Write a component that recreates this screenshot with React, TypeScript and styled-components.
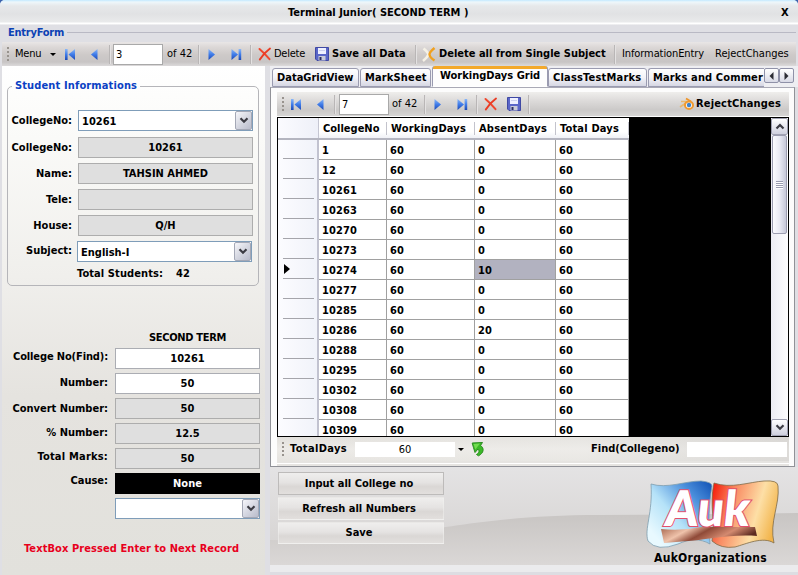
import React from 'react';
import styled, { createGlobalStyle, css } from 'styled-components';

const Global = createGlobalStyle`
  * { box-sizing: border-box; }
  body { margin: 0; background: #3a62ad; overflow: hidden; }
  #root { font: bold 11px/14px "DejaVu Sans Condensed", "DejaVu Sans", sans-serif; color: #000; }
  svg { display: block; overflow: visible; }
`;

const Window = styled.div`
  width: 798px;
  height: 575px;
  overflow: hidden;
  display: flex;
  flex-direction: column;
  background: #dfdfe4;
  border-radius: 5px 5px 0 0;
`;

const TitleBar = styled.header`
  height: 25px;
  flex: none;
  display: grid;
  grid-template-columns: 288px 493px 1fr;
  align-items: center;
  background: linear-gradient(#c3e9ff 0, #eef7fb 2px, #e6e8ea 6px, #e1e2e4 14px, #e9eaeb 22px, #fff 23px, #fff 24px, #dcdce0 25px);
`;

const Text = styled.span<{ $ls?: number; $regular?: boolean }>`
  white-space: nowrap;
  letter-spacing: ${p => p.$ls ?? 0}px;
  font-weight: ${p => (p.$regular ? 400 : 700)};
`;

const FormCaption = styled.div`
  height: 17px;
  flex: none;
  display: flex;
  align-items: center;
  color: #0b41b4;
  padding: 0 2px 2px 8px;
  &::after {
    content: '';
    flex: 1;
    height: 1px;
    margin-left: 3px;
    background: #b9b9c4;
  }
`;

const barFace = {
  main: 'linear-gradient(#e9e6e6 0, #dcd8d7 5px, #cdc9c8 13px, #c8c5c5 20px, #dcdadb 24px)',
  inner: 'linear-gradient(#efeeec 0, #dedcdb 8px, #cbc9c8 18px, #d6d5d4 24px)',
  foot: 'linear-gradient(90deg, rgba(240,238,234,.3), rgba(240,239,236,.5) 60%, rgba(214,212,210,.6)), linear-gradient(#dcdad6, #ebe9e6 50%, #e2e0dc)',
};

const Bar = styled.div<{ $cols: string; $face: keyof typeof barFace; $h: number }>`
  height: ${p => p.$h}px;
  flex: none;
  display: grid;
  grid-template-columns: ${p => p.$cols};
  align-items: center;
  background: ${p => barFace[p.$face]};
`;

const MainBarFrame = styled.div`
  padding: 0 2px;
  flex: none;
`;

const Grip = styled.i`
  width: 2px;
  height: 15px;
  margin-left: 5px;
  background: repeating-linear-gradient(#98938e 0 2px, transparent 2px 4px);
`;

const Separator = styled.i`
  width: 2px;
  height: 19px;
  border-left: 1px solid #b9b6b6;
  border-right: 1px solid #e4e2e2;
`;

const Caret = styled.i`
  width: 0;
  height: 0;
  border: 3px solid transparent;
  border-top-color: #000;
  border-bottom: 0;
`;

const NumberBox = styled.div`
  width: 50px;
  height: 21px;
  border: 1px solid #a9a9a9;
  background: #fff;
  padding: 3px 2px;
  font-weight: 400;
`;

const Body = styled.main`
  flex: 1;
  min-height: 0;
  display: flex;
`;

const LeftPanel = styled.section`
  width: 263px;
  margin-left: 2px;
  flex: none;
  display: flex;
  flex-direction: column;
  background: linear-gradient(#ffffff 0, #fbfbf9 60px, #f0efec 210px, #e5e3df 330px, #e2e1dc 509px);
`;

const GroupBox = styled.fieldset`
  margin: 13px 6px 0 5px;
  height: 207px;
  flex: none;
  padding: 0;
  border: 1px solid #b5b5b9;
  border-radius: 5px;
  min-width: 0;
  legend {
    margin-left: 4px;
    padding: 0 3px;
    height: 14px;
    color: #0b41c4;
  }
`;

const StudentFields = styled.div`
  padding-top: 17px;
`;

const Field = styled.div<{ $h: number; $labelWidth: number; $gap: number }>`
  height: ${p => p.$h}px;
  display: grid;
  grid-template-columns: ${p => p.$labelWidth}px 1fr;
  column-gap: ${p => p.$gap}px;
  align-items: start;
`;

const FieldLabel = styled.label<{ $ls?: number; $top: number }>`
  text-align: right;
  white-space: nowrap;
  letter-spacing: ${p => p.$ls ?? 0}px;
  padding-top: ${p => p.$top}px;
`;

const tones = {
  white: css`background: #fff; border-color: #abadb3;`,
  grey: css`background: #dfdfdf; border-color: #adadad;`,
  black: css`background: #000; border-color: #000; color: #fff;`,
};

const ValueBox = styled.div<{ $tone: keyof typeof tones; $w: number }>`
  width: ${p => p.$w}px;
  height: 21px;
  border: 1px solid;
  text-align: center;
  line-height: 19px;
  ${p => tones[p.$tone]}
`;

const ComboFrame = styled.div<{ $w: number; $shift?: number }>`
  width: ${p => p.$w}px;
  height: 21px;
  margin-left: ${p => p.$shift ?? 0}px;
  border: 1px solid #7f9db9;
  background: #fff;
  display: flex;
  justify-content: space-between;
  padding-left: 3px;
  line-height: 21px;
`;

const DropButton = styled.span`
  width: 17px;
  height: 19px;
  border: 1px solid #a4a8b6;
  border-radius: 2px;
  display: grid;
  place-items: center;
  background: linear-gradient(135deg, #f6f6fa, #d6d8e2 50%, #b9bccb);
`;

const Total = styled.div`
  display: flex;
  gap: 13px;
  padding: 4px 0 0 69px;
`;

const TermHeading = styled.div`
  margin: 45px 5px 3px 113px;
  text-align: center;
  letter-spacing: -0.3px;
`;

const Warning = styled.p`
  margin: 23px 0 0 22px;
  color: #e8001c;
  letter-spacing: 0.08px;
  white-space: nowrap;
`;

const RightPanel = styled.section`
  flex: 1;
  min-width: 0;
  margin-left: 5px;
  display: flex;
  flex-direction: column;
`;

const TabStrip = styled.nav`
  height: 21px;
  flex: none;
  display: flex;
  align-items: flex-end;
  padding-left: 2px;
  background: #eeeef2;
`;

const Tab = styled.div<{ $w: number; $active?: boolean; $ls?: number; $cut?: boolean }>`
  width: ${p => p.$w}px;
  height: ${p => (p.$active ? 21 : 19)}px;
  flex: none;
  overflow: hidden;
  white-space: nowrap;
  padding-left: ${p => (p.$active ? 7 : 4)}px;
  letter-spacing: ${p => p.$ls ?? 0}px;
  line-height: ${p => (p.$active ? 14 : 18)}px;
  border: 1px solid #9a9bb0;
  border-bottom-color: ${p => (p.$active ? '#fff' : '#9a9bb0')};
  border-radius: ${p => (p.$cut ? '3px 0 0 0' : '3px 3px 0 0')};
  background: linear-gradient(#fff, #f3f3f8 50%, #d6d7e3);
  margin-right: 1px;
  ${p => p.$cut && css`border-right: 0; margin-right: 0;`}
  ${p => p.$active && css`
    background: linear-gradient(#f3a92b 0 3px, #fdfdfd 3px);
    border-top: 0;
    padding-top: 3px;
    margin-right: 0;
  `}
`;

const ScrollTab = styled.span`
  width: 15px;
  height: 15px;
  margin: 0 0 4px 0;
  border: 1px solid #8f91a8;
  border-radius: 2px;
  display: grid;
  place-items: center;
  background: linear-gradient(#fff, #d9dae6);
`;

const TabPage = styled.div`
  width: 525px;
  height: 380px;
  flex: none;
  display: flex;
  flex-direction: column;
  padding: 4px 5px 0 6px;
  border: 1px solid #919298;
  border-top-color: #a9a9b5;
  background: #fcfcfc;
`;

const Grid = styled.div`
  height: 320px;
  width: 512px;
  flex: none;
  border: 1px solid #000;
  background: #000;
  display: flex;
  overflow: hidden;
  margin-top: 1px;
`;

const cols = '41px 68px 88px 81px 73px';

const Table = styled.div`
  width: 351px;
  background: #fff;
`;

const HeadRow = styled.div`
  height: 22px;
  display: grid;
  grid-template-columns: ${cols};
  background: linear-gradient(#fff 70%, #f0f1f6);
  border-bottom: 2px solid #b4b5c0;
`;

const HeadCell = styled.div<{ $ls?: number }>`
  padding: 4px 0 0 4px;
  white-space: nowrap;
  letter-spacing: ${p => p.$ls ?? 0}px;
  background: linear-gradient(#c3c3cc, #c3c3cc) right 4px / 1px 13px no-repeat;
  &:first-child { background: linear-gradient(90deg, #fbfbff, #eef0f8); border-right: 1px solid #c5c6d2; }
`;

const Row = styled.div`
  height: 20px;
  display: grid;
  grid-template-columns: ${cols};
`;

const RowHead = styled.div`
  border-right: 2px solid #c2c3d0;
  background: linear-gradient(#a5a5ab, #a5a5ab) 5px 18px / 31px 1px no-repeat, linear-gradient(90deg, #fcfcff, #f1f3fa);
  padding: 4px 0 0 6px;
`;

const Cell = styled.div<{ $selected?: boolean }>`
  border-right: 1px solid #a0a0a0;
  border-bottom: 1px solid #a0a0a0;
  padding: 4px 0 0 3px;
  background: ${p => (p.$selected ? '#b2b2c0' : '#fff')};
  letter-spacing: 0.1px;
`;

const ScrollBar = styled.div`
  width: 17px;
  margin-left: 142px;
  flex: none;
  display: flex;
  flex-direction: column;
  background: linear-gradient(90deg, #ececf3, #fdfdfe);
`;

const ScrollButton = styled.span`
  height: 17px;
  flex: none;
  border: 1px solid #a0a1b2;
  border-radius: 2px;
  display: grid;
  place-items: center;
  background: linear-gradient(#fff, #cfd0de);
`;

const Thumb = styled.span`
  height: 99px;
  flex: none;
  margin: 0 1px;
  border: 1px solid #9c9db0;
  border-radius: 2px;
  display: grid;
  place-items: center;
  background: linear-gradient(90deg, #fcfcff, #e9eaf3 50%, #c6c8d8);
  &::after {
    content: '';
    width: 7px;
    height: 8px;
    background: repeating-linear-gradient(#9a9cb0 0 1px, #fff 1px 2px);
  }
`;

const Filler = styled.span`
  flex: 1;
`;

const WhiteBox = styled.div`
  width: 100px;
  height: 15px;
  background: #fff;
  text-align: center;
  font-weight: 400;
  line-height: 16px;
`;

const FootLine = styled.div`
  height: 5px;
  background: linear-gradient(#e6e4e1 0 2px, #fff 2px 3px, #e6e4e1 3px);
`;

const Lower = styled.section`
  flex: 1;
  min-height: 0;
  display: grid;
  grid-template-columns: 1fr auto;
  grid-template-rows: 1fr;
`;

const Backdrop = styled.svg`
  grid-area: 1 / 1 / 2 / 3;
`;

const Actions = styled.div`
  grid-area: 1 / 1;
  z-index: 1;
  display: flex;
  flex-direction: column;
  padding: 5px 0 0 8px;
  gap: 2px;
`;

const Action = styled.button<{ $framed?: boolean }>`
  width: 166px;
  height: ${p => (p.$framed ? 23 : 22.5)}px;
  font: inherit;
  color: inherit;
  padding: 1px 4px 0 0;
  border: 1px solid ${p => (p.$framed ? '#bdbbba' : 'rgba(242,241,240,.5)')};
  background: linear-gradient(#efeeed, #e5e3e2 45%, #dad7d5 65%, #e2dfdd);
`;

const Brand = styled.div`
  grid-area: 1 / 2;
  z-index: 1;
  width: 151px;
  padding: 12px 0 0;
  display: flex;
  flex-direction: column;
  align-items: flex-start;
`;

const BrandName = styled.div`
  margin-left: 7px;
  font-size: 12px;
  letter-spacing: 0.3px;
  white-space: nowrap;
`;

function BlueArrow({ back, end }: { back?: boolean; end?: boolean }) {
  return (
    <svg width="11" height="13" viewBox="0 0 11 13">
      <defs>
        <linearGradient id="blue" x1="0" y1="0" x2="0" y2="1">
          <stop offset="0" stopColor="#8ab8f8" />
          <stop offset=".5" stopColor="#3f7be8" />
          <stop offset="1" stopColor="#1c49b5" />
        </linearGradient>
      </defs>
      {back ? (
        end ? (
          <>
            <rect x="0" y="1" width="2.6" height="11" fill="url(#blue)" />
            <path d="M10 1v11L3.500 6.500z" fill="url(#blue)" />
          </>
        ) : (
          <path d="M6.500 1v11L0 6.500z" fill="url(#blue)" />
        )
      ) : end ? (
        <>
          <path d="M0.500 1v11l6.500-5.500z" fill="url(#blue)" />
          <rect x="7.600" y="1" width="2.600" height="11" fill="url(#blue)" />
        </>
      ) : (
        <path d="M.5 1v11L7 6.500z" fill="url(#blue)" />
      )}
    </svg>
  );
}

const Cross = () => (
  <svg width="14" height="14" viewBox="0 0 14 14" fill="none" strokeLinecap="round">
    <path d="M1.500 2C5 5 8 8 11.500 12.200" stroke="#f0482e" strokeWidth="2" />
    <path d="M12 1.500C8 4.500 4.500 8 1.800 12.500" stroke="#ea3c24" strokeWidth="1.900" />
  </svg>
);

const Floppy = () => (
  <svg width="14" height="14" viewBox="0 0 14 14">
    <path d="M.5.5h13v13H2l-1.500-1.500z" fill="#5a66c8" stroke="#4049a4" />
    <rect x="3" y="1" width="8" height="6" fill="#eef0ff" />
    <path d="M4 3.500h6" stroke="#ccd1ee" />
    <rect x="3.500" y="9" width="7" height="4.500" fill="#c9cbd8" />
    <rect x="4.500" y="10" width="2" height="3" fill="#2a2e62" />
  </svg>
);

const SplitCross = () => (
  <svg width="15" height="15" viewBox="0 0 15 15" fill="none">
    <path d="M1.500 1.500C4 3.500 6 5.500 6.500 7.500C5.500 10 3.500 12 1 14" stroke="#f5f1e6" strokeWidth="2.600" />
    <path d="M12.500 1C9.500 3.500 7.300 5.500 7.500 7.500s2 4 5 6" stroke="#f0a01e" strokeWidth="2.400" />
  </svg>
);

const OrangeSwirl = () => (
  <svg width="15" height="14" viewBox="0 0 15 14" fill="none">
    <path d="M1 4.500h6M0 10l6-4" stroke="#e9b970" strokeWidth="1.600" />
    <path d="M6 1.500l5 3" stroke="#ee9428" strokeWidth="1.800" />
    <ellipse cx="9" cy="8.200" rx="4" ry="3.700" fill="#fff" stroke="#f09a30" strokeWidth="2.100" />
    <circle cx="9" cy="8" r="2.200" fill="#3f84cc" />
  </svg>
);

const GreenArrow = () => (
  <svg width="14" height="16" viewBox="0 0 14 16">
    <path d="M1.200 2L11.500 1.500L9.500 4.500C13.500 7 13 12 7.500 14.800L5.500 13.500C8.500 11.500 8.500 10 7 8L4 11.500C3 8.500 2 5 1.200 2z" fill="#3cb828" stroke="#2a8c20" />
    <path d="M2.500 3L9 2.600L4.300 8.500z" fill="#72dc50" />
  </svg>
);

function Chevron({ dir = 'down' }: { dir?: 'down' | 'up' }) {
  return (
    <svg width="10" height="7" viewBox="0 0 10 7" fill="none" stroke="#3c3c44" strokeWidth="2.200">
      <path d={dir === 'down' ? 'M1.500 1.200L5 4.700L8.500 1.200' : 'M1.500 5.500L5 2L8.500 5.500'} />
    </svg>
  );
}

function Triangle({ left }: { left?: boolean }) {
  return (
    <svg width="5" height="8" viewBox="0 0 5 8">
      <path d={left ? 'M4.500 0v8L.5 4z' : 'M.5 0v8L4.500 4z'} fill="#2c2c34" />
    </svg>
  );
}

const Logo = () => (
  <svg width="134" height="72" viewBox="0 0 134 72">
    <defs>
      <linearGradient id="flagBlue" x1="1" y1="0" x2=".1" y2=".8">
        <stop offset="0" stopColor="#0f50b4" />
        <stop offset=".3" stopColor="#4a8edb" />
        <stop offset=".65" stopColor="#b5e2f8" />
        <stop offset="1" stopColor="#e8f9ff" />
      </linearGradient>
      <linearGradient id="flagRed" x1="0" y1=".2" x2="1" y2=".5">
        <stop offset="0" stopColor="#f52310" />
        <stop offset=".3" stopColor="#f98a62" />
        <stop offset=".7" stopColor="#fddfa6" />
        <stop offset="1" stopColor="#f2b44a" />
      </linearGradient>
      <linearGradient id="band" x1="0" y1="0" x2="1" y2=".3">
        <stop offset="0" stopColor="#a5644c" />
        <stop offset=".3" stopColor="#efc3ab" />
        <stop offset=".5" stopColor="#8f4a38" />
        <stop offset=".75" stopColor="#d38a70" />
        <stop offset="1" stopColor="#5c2a20" />
      </linearGradient>
    </defs>
    <path d="M4 5C20 10 38 2 54 2Q65 3 65 7C62 24 61 44 63 65C53 59 42 60 31 65Q10 73 1 62C-3 50 6 34 4 5z" fill="url(#flagBlue)" stroke="#7d9dae" strokeWidth=".8" />
    <path d="M67 4C84 10 102 3 117 2Q131 1 131 7C133 26 122 43 127 64C116 57 99 65 88 68Q74 70 65 62C69 44 62 27 67 4z" fill="url(#flagRed)" stroke="#7f6b48" strokeWidth=".8" />
    <path d="M14 50Q35 52 54 48L108 48L110 57C82 55 60 61 41 62L17 64z" fill="url(#band)" />
    <text x="20" y="47" fontFamily="Lato, sans-serif" fontWeight="800" fontSize="49" fill="#fff" stroke="#e2506c" strokeWidth="2.200" paintOrder="stroke" textLength="84" lengthAdjust="spacingAndGlyphs" transform="skewX(-6) translate(2 0)">Auk</text>
  </svg>
);

const rows = [
  ['1', '0'], ['12', '0'], ['10261', '0'], ['10263', '0'], ['10270', '0'], ['10273', '0'], ['10274', '10'],
  ['10277', '0'], ['10285', '0'], ['10286', '20'], ['10288', '0'], ['10295', '0'], ['10302', '0'], ['10308', '0'], ['10309', '0'],
];

const student = [
  { label: 'CollegeNo:', value: '10261' },
  { label: 'Name:', value: 'TAHSIN AHMED' },
  { label: 'Tele:', value: '' },
  { label: 'House:', value: 'Q/H' },
];

const marks: { label: string; value: string; tone: keyof typeof tones; top: number; ls?: number }[] = [
  { label: 'College No(Find):', value: '10261', tone: 'white', top: 2, ls: -0.13 },
  { label: 'Number:', value: '50', tone: 'white', top: 3 },
  { label: 'Convert Number:', value: '50', tone: 'grey', top: 4 },
  { label: '% Number:', value: '12.5', tone: 'grey', top: 3 },
  { label: 'Total Marks:', value: '50', tone: 'grey', top: 2, ls: 0.2 },
  { label: 'Cause:', value: 'None', tone: 'black', top: 1 },
];

function Combo({ value, width, shift }: { value: string; width: number; shift?: number }) {
  return (
    <ComboFrame $w={width} $shift={shift}>
      <span>{value}</span>
      <DropButton><Chevron /></DropButton>
    </ComboFrame>
  );
}

export default function App() {
  return (
    <Window>
      <Global />
      <TitleBar>
        <span />
        <Text>Terminal Junior( SECOND TERM )</Text>
        <Text>X</Text>
      </TitleBar>
      <FormCaption><Text $ls={-0.24}>EntryForm</Text></FormCaption>
      <MainBarFrame>
        <Bar $h={24} $face="main" $cols="13px 35px 15px 26px 18px 4px 54px 31px 10px 23px 19px 8px 16px 41px 17px 83px 7px 17px 175px 8px 93px 1fr">
          <Grip />
          <Text $regular $ls={-0.2}>Menu</Text>
          <Caret />
          <BlueArrow back end />
          <BlueArrow back />
          <Separator />
          <NumberBox>3</NumberBox>
          <Text $regular>of 42</Text>
          <Separator />
          <BlueArrow />
          <BlueArrow end />
          <Separator />
          <Cross />
          <Text $regular $ls={-0.25}>Delete</Text>
          <Floppy />
          <Text>Save all Data</Text>
          <Separator />
          <SplitCross />
          <Text>Delete all from Single Subject</Text>
          <Separator />
          <Text $regular $ls={-0.1}>InformationEntry</Text>
          <Text $regular>RejectChanges</Text>
        </Bar>
      </MainBarFrame>
      <Body>
        <LeftPanel>
          <GroupBox>
            <legend><Text $ls={0.13}>Student Informations</Text></legend>
            <StudentFields>
              <Field $h={27} $labelWidth={64} $gap={6}>
                <FieldLabel $top={4}>CollegeNo:</FieldLabel>
                <Combo value="10261" width={175} />
              </Field>
              {student.map((s, i) => (
                <Field key={i} $h={26} $labelWidth={64} $gap={6}>
                  <FieldLabel $top={4}>{s.label}</FieldLabel>
                  <ValueBox $tone="grey" $w={175}>{s.value}</ValueBox>
                </Field>
              ))}
              <Field $h={22} $labelWidth={64} $gap={6}>
                <FieldLabel $top={3}>Subject:</FieldLabel>
                <Combo value="English-I" width={175} shift={-1} />
              </Field>
            </StudentFields>
            <Total><Text $ls={0.09}>Total Students:</Text><Text>42</Text></Total>
          </GroupBox>
          <TermHeading>SECOND TERM</TermHeading>
          {marks.map(m => (
            <Field key={m.label} $h={25} $labelWidth={106} $gap={7}>
              <FieldLabel $top={m.top} $ls={m.ls}>{m.label}</FieldLabel>
              <ValueBox $tone={m.tone} $w={145}>{m.value}</ValueBox>
            </Field>
          ))}
          <Field $h={21} $labelWidth={106} $gap={7}>
            <span />
            <Combo value="" width={145} />
          </Field>
          <Warning>TextBox Pressed Enter to Next Record</Warning>
        </LeftPanel>
        <RightPanel>
          <TabStrip>
            <Tab $w={87}>DataGridView</Tab>
            <Tab $w={71} $ls={0.15}>MarkSheet</Tab>
            <Tab $w={116} $active>WorkingDays Grid</Tab>
            <Tab $w={99} $ls={0.2}>ClassTestMarks</Tab>
            <Tab $w={116} $ls={0.13} $cut>Marks and Commer</Tab>
            <ScrollTab><Triangle left /></ScrollTab>
            <ScrollTab><Triangle /></ScrollTab>
          </TabStrip>
          <TabPage>
            <Bar $h={24} $face="inner" $cols="14px 26px 17px 5px 53px 32px 10px 23px 19px 8px 23px 21px 152px 16px 1fr">
              <Grip />
              <BlueArrow back end />
              <BlueArrow back />
              <Separator />
              <NumberBox>7</NumberBox>
              <Text $regular>of 42</Text>
              <Separator />
              <BlueArrow />
              <BlueArrow end />
              <Separator />
              <Cross />
              <Floppy />
              <Separator />
              <OrangeSwirl />
              <Text $ls={0.17}>RejectChanges</Text>
            </Bar>
            <Grid>
              <Table>
                <HeadRow>
                  <HeadCell />
                  <HeadCell>CollegeNo</HeadCell>
                  <HeadCell $ls={0.16}>WorkingDays</HeadCell>
                  <HeadCell $ls={0.2}>AbsentDays</HeadCell>
                  <HeadCell $ls={0.18}>Total Days</HeadCell>
                </HeadRow>
                {rows.map(([id, absent]) => (
                  <Row key={id}>
                    <RowHead>
                      {id === '10274' && (
                        <svg width="6" height="10" viewBox="0 0 6 10"><path d="M0 0v10L6 5z" /></svg>
                      )}
                    </RowHead>
                    <Cell>{id}</Cell>
                    <Cell>60</Cell>
                    <Cell $selected={id === '10274'}>{absent}</Cell>
                    <Cell>60</Cell>
                  </Row>
                ))}
              </Table>
              <ScrollBar>
                <ScrollButton><Chevron dir="up" /></ScrollButton>
                <Thumb />
                <Filler />
                <ScrollButton><Chevron /></ScrollButton>
              </ScrollBar>
            </Grid>
            <Bar $h={24} $face="foot" $cols="13px 65px 103px 13px 120px 96px 100px 1fr">
              <Grip />
              <Text $ls={0.36}>TotalDays</Text>
              <WhiteBox>60</WhiteBox>
              <Caret />
              <GreenArrow />
              <Text>Find(Collegeno)</Text>
              <WhiteBox />
            </Bar>
            <FootLine />
          </TabPage>
          <Lower>
            <Backdrop width="528" height="108" viewBox="0 0 528 108" preserveAspectRatio="none">
              <defs>
                <linearGradient id="pale" x1="0" y1="0" x2="0" y2="1">
                  <stop offset="0" stopColor="#e4e3e4" />
                  <stop offset="1" stopColor="#d2cfcd" />
                </linearGradient>
                <linearGradient id="deep" x1="0" y1="0" x2="0" y2="1">
                  <stop offset="0" stopColor="#c8c5c3" />
                  <stop offset="1" stopColor="#dedbda" />
                </linearGradient>
              </defs>
              <rect width="528" height="108" fill="url(#pale)" />
              <path d="M0 73C150 76 180 48 330 48Q440 47 528 46V108H0z" fill="url(#deep)" />
              <rect y="98" width="528" height="7" fill="#ebebed" />
              <rect y="105" width="528" height="3" fill="#dddde2" />
            </Backdrop>
            <Actions>
              <Action $framed>Input all College no</Action>
              <Action>Refresh all Numbers</Action>
              <Action>Save</Action>
            </Actions>
            <Brand>
              <Logo />
              <BrandName>AukOrganizations</BrandName>
            </Brand>
          </Lower>
        </RightPanel>
      </Body>
    </Window>
  );
}
